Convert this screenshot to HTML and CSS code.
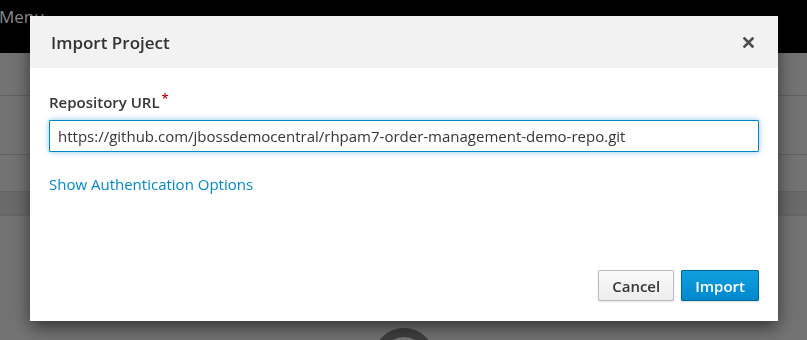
FILE: index.html
```html
<!DOCTYPE html>
<html lang="en">
<head>
    <meta charset="UTF-8">
    <meta name="viewport" content="width=device-width, initial-scale=1.0">
    <title>Import Project</title>
    <link rel="stylesheet" href="styles.css">
</head>
<body>

    <!-- page behind the backdrop -->
    <div class="navbar">
        <span class="menu-label">Menu ...</span>
    </div>
    <div class="page">
        <div class="page-row row-title"></div>
        <div class="page-row row-toolbar"></div>
        <div class="page-row row-plain"></div>
        <div class="page-row row-band"></div>
        <div class="spinner"></div>
    </div>

    <!-- modal -->
    <div class="modal">
        <div class="modal-header">
            <h4 class="modal-title">Import Project</h4>
            <button class="close" type="button" aria-label="Close">
                <svg width="11" height="11" viewBox="0 0 11 11">
                    <path d="M1.5 1.5 L9.5 9.5 M9.5 1.5 L1.5 9.5" stroke="#4d4d4d" stroke-width="2.6" stroke-linecap="square" fill="none"/>
                </svg>
            </button>
        </div>
        <div class="modal-body">
            <label for="repoUrl" class="field-label">Repository URL<span class="required">*</span></label>
            <input type="text" id="repoUrl" class="form-control" value="https://github.com/jbossdemocentral/rhpam7-order-management-demo-repo.git">
            <a href="#" class="auth-link">Show Authentication Options</a>
        </div>
        <div class="modal-footer">
            <button class="btn btn-default" type="button">Cancel</button>
            <button class="btn btn-primary" type="button">Import</button>
        </div>
    </div>

</body>
</html>
```

FILE: styles.css
```css
html, body {
    height: 340px;
    overflow: hidden;
}
body {
    margin: 0;
    font-family: "Open Sans", "Liberation Sans", sans-serif;
    background: #737373;
}
.navbar {
    height: 53px;
    background: #000;
}
.menu-label {
    display: block;
    margin-left: -1px;
    padding-top: 5px;
    font-size: 17px;
    color: #8a8a8a;
    line-height: 24px;
}
.page {
    height: 287px;
    overflow: hidden;
}
.page-row {
    border-bottom: 1px solid #616161;
}
.row-title {
    height: 42px;
}
.row-toolbar {
    height: 58px;
}
.row-plain {
    height: 36px;
    border-bottom: none;
}
.row-band {
    height: 23px;
    background: #6a6a6a;
    border-top: 1px solid #666;
    border-bottom: 1px solid #666;
}
.spinner {
    width: 44px;
    height: 44px;
    margin: 112px auto 0;
    border: 9px solid #3f3f3f;
    border-radius: 50%;
}
.modal {
    position: fixed;
    top: 16px;
    left: 30px;
    width: 748px;
    background: #fff;
    box-shadow: 0 6px 16px rgba(0, 0, 0, 0.55);
}
.modal-header {
    display: flex;
    align-items: center;
    justify-content: space-between;
    height: 52px;
    padding: 0 24px 0 21px;
    background: #f2f2f2;
}
.modal-title {
    margin: 0;
    font-size: 17px;
    font-weight: 600;
    color: #333;
}
.close {
    border: none;
    background: none;
    padding: 0;
    display: flex;
    cursor: pointer;
}
.modal-body {
    padding: 20px 19px 0;
}
.field-label {
    display: block;
    font-size: 15px;
    font-weight: 600;
    color: #363636;
    line-height: 20px;
}
.required {
    color: #c00;
    font-size: 13px;
    vertical-align: 5px;
    margin-left: 2px;
}
.form-control {
    display: block;
    box-sizing: border-box;
    width: 710px;
    height: 32px;
    margin-top: 8px;
    padding: 0 8px;
    font-family: inherit;
    font-size: 15px;
    color: #363636;
    border: 1px solid #0088ce;
    border-radius: 1px;
    outline: none;
    box-shadow: 0 0 6px rgba(0, 136, 206, 0.45);
}
.auth-link {
    display: inline-block;
    margin-top: 22px;
    font-size: 15px;
    color: #0088ce;
    text-decoration: none;
    line-height: 20px;
}
.modal-footer {
    display: flex;
    justify-content: flex-end;
    gap: 7px;
    padding: 75px 19px 20px;
}
.btn {
    height: 31px;
    padding: 0 13px;
    font-family: inherit;
    font-size: 15px;
    font-weight: 600;
    border-radius: 1px;
    cursor: pointer;
}
.btn-default {
    color: #363636;
    background: linear-gradient(#fafafa, #ededed);
    border: 1px solid #bbb;
    box-shadow: 0 1px 2px rgba(0, 0, 0, 0.12);
}
.btn-primary {
    color: #fff;
    background: linear-gradient(#0fa0de, #0088ce);
    border: 1px solid #00659c;
    box-shadow: 0 1px 2px rgba(0, 0, 0, 0.12);
}
```
